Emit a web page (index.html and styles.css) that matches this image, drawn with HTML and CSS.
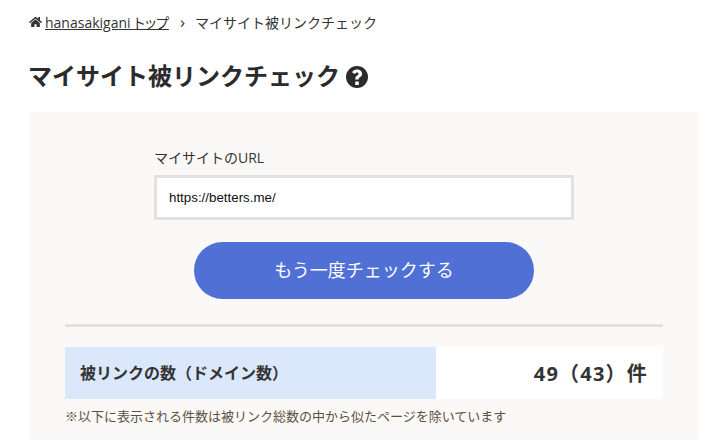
FILE: index.html
```html
<!DOCTYPE html>
<html lang="ja">
<head>
  <meta charset="utf-8">
  <title>マイサイト被リンクチェック</title>
  <link rel="stylesheet" href="styles.css">
</head>
<body>
  <div class="breadcrumb">
    <svg class="home-icon" viewBox="0 0 576 512"><path d="M280 148 96 300v164c0 9 7 16 16 16l112-.3c9 0 16-7 16-16V368c0-9 7-16 16-16h64c9 0 16 7 16 16v96c0 9 7 16 16 16l112 .3c9 0 16-7 16-16V300L296 148c-5-4-11-4-16 0zM572 251l-84-69V44c0-7-5-12-12-12h-56c-7 0-12 5-12 12v72l-89-74c-18-15-43-15-61 0L4 251c-5 4-6 12-2 17l26 31c4 5 12 6 17 2L280 107c4-4 11-4 16 0l235 194c5 4 13 3 17-2l26-31c4-5 3-13-2-17z"/></svg>
    <a href="#">hanasakigani トップ</a>
    <span class="sep">›</span>
    <span>マイサイト被リンクチェック</span>
  </div>

  <h1 class="page-title">
    マイサイト被リンクチェック
    <svg class="help-icon" viewBox="0 0 24 24"><path fill-rule="evenodd" d="M12 1a11 11 0 1 0 0 22 11 11 0 0 0 0-22zM10.2 16.4h3.6V20h-3.6zM12 4.4c2.9 0 5.1 1.8 5.1 4.3 0 1.8-1 2.8-2.2 3.6-.9.6-1.2 1-1.2 1.6v.6h-3.4v-.9c0-1.5.7-2.4 1.9-3.2.9-.6 1.4-1 1.4-1.6 0-.7-.6-1.2-1.5-1.2-1 0-1.7.6-2.2 1.5L7 7.3c.9-1.8 2.6-2.9 5-2.9z"/></svg>
  </h1>

  <div class="panel">
    <form class="check-form">
      <label class="url-label" for="url">マイサイトのURL</label>
      <input class="url-input" id="url" type="text" value="https://betters.me/">
      <button class="check-button" type="button">もう一度チェックする</button>
    </form>

    <hr class="divider">

    <div class="count-row">
      <div class="count-label">被リンクの数（ドメイン数）</div>
      <div class="count-value">49（43）件</div>
    </div>
    <p class="note">※以下に表示される件数は被リンク総数の中から似たページを除いています</p>
  </div>
</body>
</html>
```

FILE: styles.css
```css
* {
  box-sizing: border-box;
}

body {
  margin: 0;
  padding: 0 20px 0 29px;
  height: 441px;
  overflow: hidden;
  background-color: #ffffff;
  color: #333333;
  font-family: "Open Sans", "Noto Sans CJK JP", sans-serif;
}

.breadcrumb {
  display: flex;
  align-items: center;
  height: 44px;
  font-size: 14px;
}

.breadcrumb a {
  color: #333333;
  margin-left: 3px;
  font-feature-settings: "palt";
}

.home-icon {
  width: 13px;
  height: 12px;
  fill: #333333;
}

.sep {
  margin: 0 10px 0 11px;
  font-size: 17px;
  line-height: 14px;
}

.page-title {
  display: flex;
  align-items: center;
  gap: 5px;
  height: 60px;
  margin: 0 0 8px -1px;
  font-size: 24px;
  font-weight: 700;
  color: #2b2b2b;
}

.help-icon {
  width: 24px;
  height: 24px;
  margin-top: 6px;
  fill: #2b2b2b;
}

.panel {
  height: 328px;
  padding: 0 36px;
  background-color: #fbf9f7;
}

.check-form {
  display: flex;
  flex-direction: column;
  width: 420px;
  margin: 0 auto 0 89px;
  padding-top: 36px;
}

.url-label {
  font-size: 14px;
  line-height: 20px;
  margin-bottom: 7px;
}

.url-input {
  height: 45px;
  padding: 0 12px;
  border: 3px solid #e3e1e0;
  border-radius: 0;
  background: #ffffff;
  color: #111111;
  font-family: "Liberation Sans", sans-serif;
  font-size: 13.33px;
}

.check-button {
  align-self: center;
  width: 340px;
  height: 57px;
  margin-top: 22px;
  padding-bottom: 5px;
  border: none;
  border-radius: 29px;
  background-color: #5070d6;
  color: #ffffff;
  font-family: inherit;
  font-size: 18px;
}

.divider {
  height: 3px;
  margin: 25px 0 20px;
  border: none;
  background-color: #e3e2d6;
}

.count-row {
  display: flex;
  height: 52px;
  background-color: #ffffff;
}

.count-label {
  display: flex;
  align-items: center;
  width: 371px;
  padding: 0 0 2px 15px;
  background-color: #dbe7fb;
  font-size: 16px;
  font-weight: 700;
}

.count-value {
  flex: 1;
  align-self: center;
  padding: 0 15px 2px 0;
  text-align: right;
  font-size: 20px;
  font-weight: 700;
  letter-spacing: 1.2px;
}

.note {
  margin: 7px 0 0;
  font-size: 13px;
  line-height: 20px;
  color: #5a5040;
}
```
